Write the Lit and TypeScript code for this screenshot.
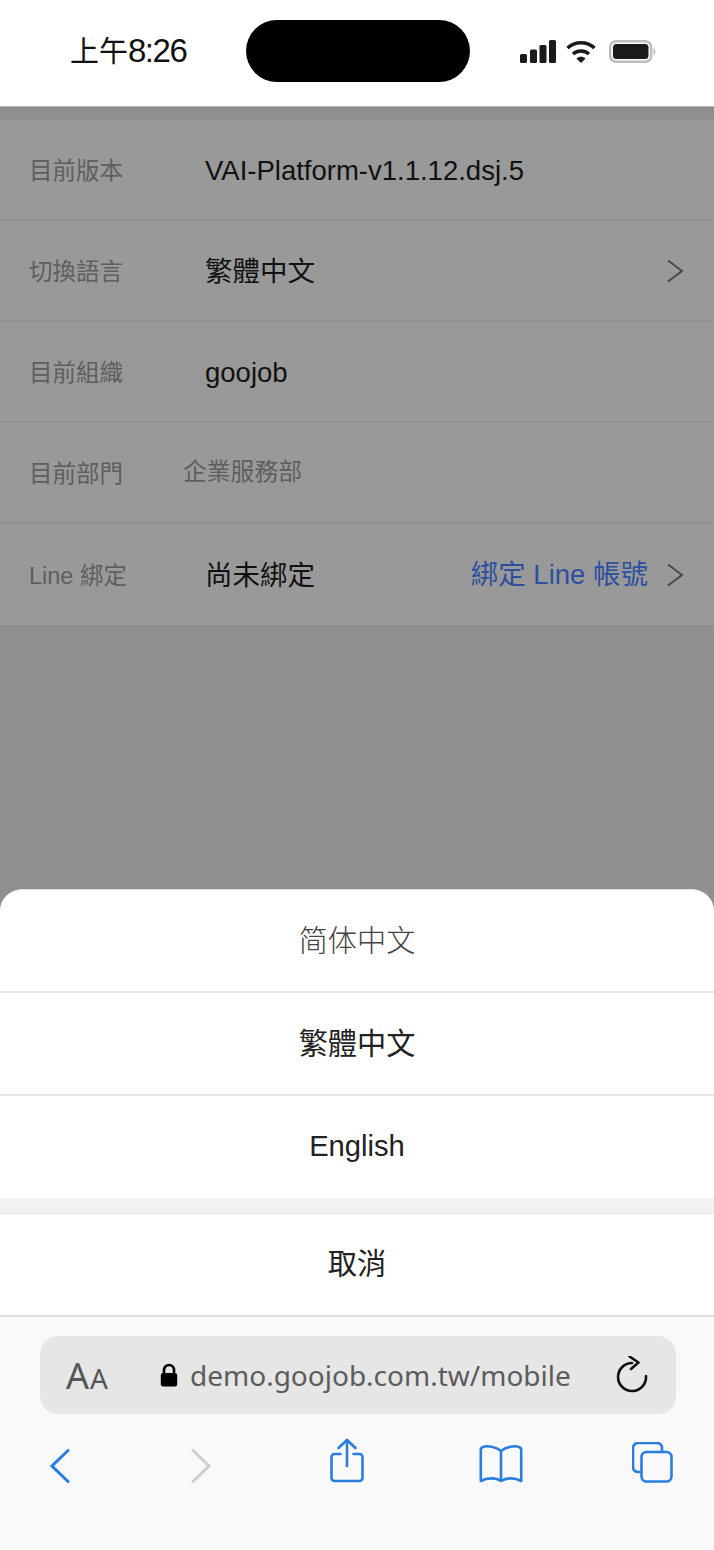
import { LitElement, html, css } from "lit";
import { customElement } from "lit/decorators.js";

const chevron = html`<svg class="chev" width="18" height="24" viewBox="0 0 18 24" fill="none" stroke="#4a4a4a" stroke-width="2"><path d="M2 1.5 L16 12 L2 22.5"/></svg>`;

@customElement("app-root")
export class AppRoot extends LitElement {
  static styles = css`
    :host { display: block; width: 714px; height: 1550px; overflow: hidden; font-family: "Liberation Sans", "Noto Sans CJK TC", sans-serif; }
    * { box-sizing: border-box; }
    .page { width: 714px; height: 1550px; display: flex; flex-direction: column; background: #fff; }
    .status { height: 106px; flex: none; background: #fff; display: grid; grid-template-columns: 246px 224px 1fr; padding-top: 20px; align-items: start; }
    .time { padding-left: 70px; font-size: 29px; line-height: 62px; color: #111; height: 62px; white-space: nowrap; }
    .time .d { font-size: 33px; letter-spacing: -1.5px; }
    .island { width: 224px; height: 62px; border-radius: 31px; background: #000; }
    .sys { display: flex; align-items: center; height: 62px; padding-left: 50px; gap: 10px; }
    .sys .batt { margin-left: 3px; }
    .body { height: 808px; flex: none; background: #8f8f8f; padding-top: 13px; border-top: 1px solid #b4b4b4; }
    .row { height: 101px; background: #999; border-bottom: 2px solid #919191; display: flex; align-items: center; padding: 0 30px 0 29px; font-size: 27.5px; color: #111; }
    .row:last-child { border-bottom: none; }
    .label { width: 176px; flex: none; font-size: 23.5px; color: #5e5e5e; padding-bottom: 2px; }
    .val { flex: 1; padding-top: 2px; }
    .val.cjk { padding: 0 0 3px; }
    .val.muted { font-size: 23.8px; color: #5e5e5e; margin-left: -22px; padding: 0 0 7px; }
    .link { color: #2c4f9f; font-size: 27.5px; margin-right: 18px; padding-bottom: 5px; }
    .sheet { flex: none; height: 661px; background: #fff; border-radius: 22px 22px 0 0; margin-top: -25px; display: flex; flex-direction: column; border-top: 1px solid #e2e2e2; position: relative; }
    .opt { height: 103px; display: flex; align-items: center; justify-content: center; font-size: 29.2px; color: #222; border-bottom: 2px solid #e6e6e6; flex: none; padding-bottom: 5px; }
    .opt.plain { border-bottom: none; height: 102px; padding-bottom: 1px; }
    .opt.thin { color: #444; font-family: "Noto Sans CJK SC", serif; font-weight: 300; padding-bottom: 5px; }
    .opt.cancel { border-bottom: 2px solid #dedede; padding-bottom: 7px; }
    .gap { height: 16px; flex: none; background: #f2f2f4; border-bottom: 1px solid #e4e4e6; }
    .bar { flex: 1; background: #f9f9f9; padding: 19px 38px 0 40px; }
    .addr { height: 78px; border-radius: 18px; background: #e6e6e6; display: flex; align-items: center; padding: 0 28px 0 26px; }
    .aa { display: flex; align-items: baseline; color: #555; font-family: "Noto Sans", sans-serif; width: 94px; flex: none; }
    .aa .b { font-size: 36px; }
    .aa .s { font-size: 28px; margin-left: 1px; }
    .url { font-family: "Noto Sans", sans-serif; font-size: 28px; color: #5c5c5c; margin-left: 12px; flex: 1; white-space: nowrap; }
    .tools { position: relative; height: 60px; margin-top: 23px; }
    .tools svg { position: absolute; }
  `;

  render() {
    return html`
      <div class="page">
        <div class="status">
          <div class="time">上午<span class="d">8:26</span></div>
          <div class="island"></div>
          <div class="sys">
            <svg width="36" height="23" viewBox="0 0 36 23" fill="#1a1a1a">
              <rect x="0" y="14" width="7" height="9" rx="1.5"/><rect x="10" y="9.5" width="7" height="13.5" rx="1.5"/><rect x="19.5" y="5" width="7" height="18" rx="1.5"/><rect x="29" y="0" width="7" height="23" rx="1.5"/>
            </svg>
            <svg width="30" height="23" viewBox="0 0 30 23" fill="none" stroke="#1a1a1a" stroke-width="3.6">
              <path d="M1.5 8 C9 1 21 1 28.5 8"/><path d="M7 14 C11.5 10 18.5 10 23 14"/><path d="M15 23 L10.4 18.4 C13 16.2 17 16.2 19.6 18.4 Z" fill="#1a1a1a" stroke="none"/>
            </svg>
            <svg class="batt" width="47" height="23" viewBox="0 0 47 23">
              <rect x="1.2" y="1.2" width="41" height="20.6" rx="6" fill="none" stroke="#bcbcbc" stroke-width="2.4"/>
              <rect x="4" y="4" width="35.5" height="15" rx="3.5" fill="#1a1a1a"/>
              <path d="M44.5 8 C47 9 47 14 44.5 15 Z" fill="#bcbcbc"/>
            </svg>
          </div>
        </div>

        <div class="body">
          <div class="row"><div class="label">目前版本</div><div class="val">VAI-Platform-v1.1.12.dsj.5</div></div>
          <div class="row"><div class="label">切換語言</div><div class="val cjk">繁體中文</div>${chevron}</div>
          <div class="row"><div class="label">目前組織</div><div class="val">goojob</div></div>
          <div class="row"><div class="label">目前部門</div><div class="val muted">企業服務部</div></div>
          <div class="row"><div class="label">Line 綁定</div><div class="val cjk">尚未綁定</div><div class="link">綁定 Line 帳號</div>${chevron}</div>
        </div>

        <div class="sheet">
          <div class="opt thin">简体中文</div>
          <div class="opt">繁體中文</div>
          <div class="opt plain">English</div>
          <div class="gap"></div>
          <div class="opt cancel">取消</div>
          <div class="bar">
            <div class="addr">
              <div class="aa"><span class="b">A</span><span class="s">A</span></div>
              <svg width="18" height="24" viewBox="0 0 18 24"><path d="M4 11 V7 a5 5 0 0 1 10 0 V11" fill="none" stroke="#000" stroke-width="2.6"/><rect x="0.8" y="10" width="16.4" height="13.6" rx="2.4" fill="#000"/></svg>
              <div class="url">demo.goojob.com.tw/mobile</div>
              <svg width="32" height="38" viewBox="0 0 32 38" fill="none" stroke="#111" stroke-width="2.6" stroke-linecap="round" stroke-linejoin="round">
                <path d="M16 7 A14 14 0 1 0 30 20"/><path d="M13.5 0.5 L22.5 6.5 L15 13"/>
              </svg>
            </div>
            <div class="tools">
              <svg style="left:10px;top:12px" width="20" height="34" viewBox="0 0 20 34" fill="none" stroke="#2a7de1" stroke-width="3" stroke-linecap="round"><path d="M18 1.5 L2 17 L18 32.5"/></svg>
              <svg style="left:151px;top:12px" width="20" height="34" viewBox="0 0 20 34" fill="none" stroke="#cfcfcf" stroke-width="3" stroke-linecap="round"><path d="M2 1.5 L18 17 L2 32.5"/></svg>
              <svg style="left:290px;top:1px" width="34" height="45" viewBox="0 0 34 45" fill="none" stroke="#2a7de1" stroke-width="2.6" stroke-linecap="round" stroke-linejoin="round"><path d="M17 2 V28"/><path d="M8.5 10 L17 2 L25.5 10"/><path d="M10.5 16 H4.5 a3 3 0 0 0 -3 3 V40 a3 3 0 0 0 3 3 H29.5 a3 3 0 0 0 3 -3 V19 a3 3 0 0 0 -3 -3 H23.5"/></svg>
              <svg style="left:439px;top:8px" width="44" height="38" viewBox="0 0 44 38" fill="none" stroke="#2a7de1" stroke-width="2.6" stroke-linejoin="round"><path d="M22 6 C17 1.5 8 0.5 4 2 C2.5 2.5 1.8 3.8 1.8 5 V36 C8 32.5 17 32.5 22 36 C27 32.5 36 32.5 42.2 36 V5 C42.2 3.8 41.5 2.5 40 2 C36 0.5 27 1.5 22 6 Z"/><path d="M22 6 V36"/></svg>
              <svg style="left:592px;top:5px" width="41" height="41" viewBox="0 0 41 41" fill="none" stroke="#2a7de1" stroke-width="2.6"><path d="M9.5 30 H6 a5 5 0 0 1 -5 -5 V6 a5 5 0 0 1 5 -5 H25 a5 5 0 0 1 5 5 V9.5"/><rect x="9.5" y="10" width="30" height="29.5" rx="5"/></svg>
            </div>
          </div>
        </div>
      </div>
    `;
  }
}
